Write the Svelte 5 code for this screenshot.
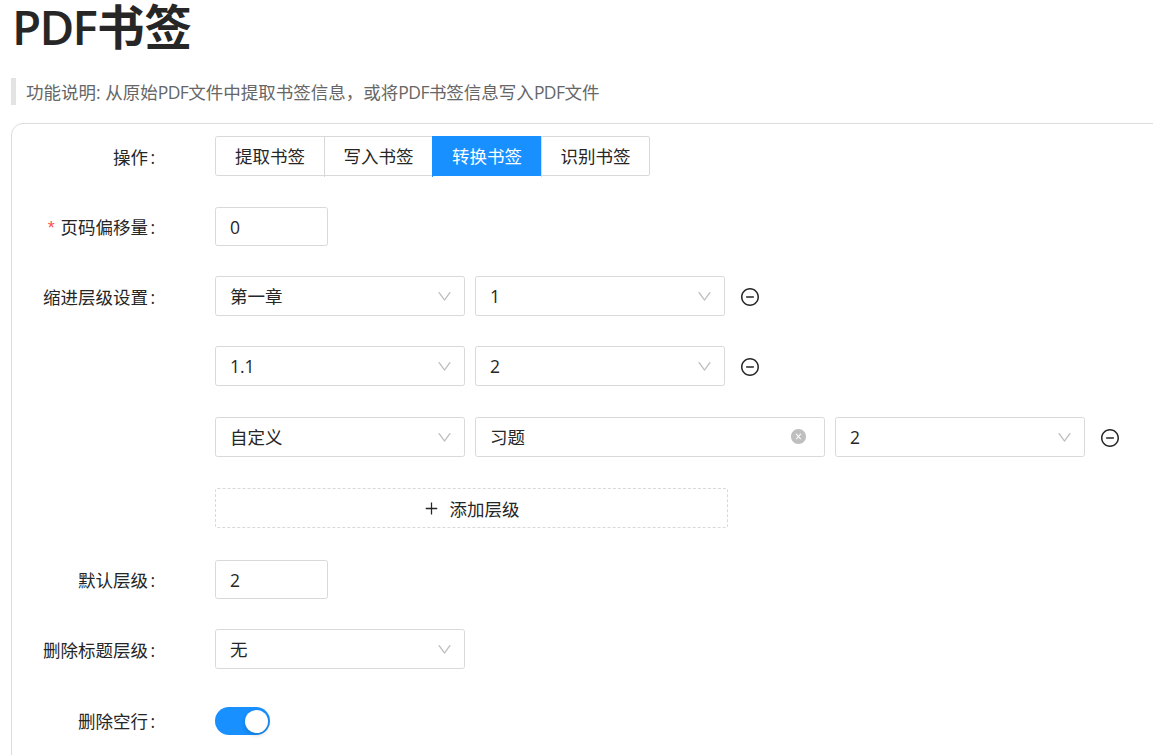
<script>
  const down = "M884 256h-75c-5.1 0-9.9 2.5-12.9 6.6L512 654.2 227.9 262.6c-3-4.1-7.8-6.6-12.9-6.6h-75c-6.5 0-10.3 7.4-6.5 12.7l352.6 486.1c12.8 17.6 39 17.6 51.7 0l352.6-486.1c3.9-5.3.1-12.7-6.4-12.7z";
  const tabs = ["提取书签", "写入书签", "转换书签", "识别书签"];
</script>

{#snippet select(value, cls = "")}
  <div class="box select {cls}">
    <span>{value}</span>
    <svg class="arrow" viewBox="64 64 896 896" fill="currentColor"><path d={down} /></svg>
  </div>
{/snippet}

{#snippet minus()}
  <svg class="minus" viewBox="64 64 896 896" fill="currentColor">
    <path d="M696 480H328c-4.4 0-8 3.6-8 8v48c0 4.4 3.6 8 8 8h368c4.4 0 8-3.6 8-8v-48c0-4.4-3.6-8-8-8z" />
    <path d="M512 64C264.6 64 64 264.6 64 512s200.6 448 448 448 448-200.6 448-448S759.4 64 512 64zm0 820c-205.4 0-372-166.6-372-372s166.6-372 372-372 372 166.6 372 372-166.6 372-372 372z" />
  </svg>
{/snippet}

<div class="page">
  <h1>PDF<b>书签</b></h1>
  <p class="note">功能说明: 从原始<span>PDF</span>文件中提取书签信息，或将<span>PDF</span>书签信息写入<span>PDF</span>文件</p>

  <div class="card">
    <div class="row">
      <div class="label">操作</div>
      <div class="segments">
        {#each tabs as tab, i}
          <div class="seg" class:active={i === 2}>{tab}</div>
        {/each}
      </div>
    </div>

    <div class="row g31">
      <div class="label"><i>*</i>页码偏移量</div>
      <div class="box num">0</div>
    </div>

    <div class="row g30">
      <div class="label">缩进层级设置</div>
      <div class="controls">
        {@render select("第一章")}
        {@render select("1")}
        {@render minus()}
      </div>
    </div>

    <div class="row g30">
      <div class="label empty"></div>
      <div class="controls">
        {@render select("1.1")}
        {@render select("2")}
        {@render minus()}
      </div>
    </div>

    <div class="row g31">
      <div class="label empty"></div>
      <div class="controls">
        {@render select("自定义")}
        <div class="box text">
          <span>习题</span>
          <svg class="clear" viewBox="64 64 896 896" fill="currentColor"><path d="M512 64C264.6 64 64 264.6 64 512s200.6 448 448 448 448-200.6 448-448S759.4 64 512 64zm165.4 618.2l-66-.3L512 563.4l-99.3 118.4-66.1.3c-4.4 0-8-3.5-8-8 0-1.9.7-3.7 1.9-5.2l130.1-155L340.5 359a8.32 8.32 0 0 1-1.9-5.2c0-4.4 3.6-8 8-8l66.1.3L512 464.6l99.3-118.4 66-.3c4.4 0 8 3.5 8 8 0 1.9-.7 3.7-1.9 5.2L553.5 514l130 155c1.2 1.5 1.9 3.3 1.9 5.2 0 4.4-3.6 8-8 8z" /></svg>
        </div>
        {@render select("2")}
        {@render minus()}
      </div>
    </div>

    <div class="row g31">
      <div class="label empty"></div>
      <div class="add">
        <svg viewBox="64 64 896 896" fill="currentColor"><path d="M482 152h60q8 0 8 8v704q0 8-8 8h-60q-8 0-8-8V160q0-8 8-8z" /><path d="M176 474h672q8 0 8 8v60q0 8-8 8H176q-8 0-8-8v-60q0-8 8-8z" /></svg>
        <span>添加层级</span>
      </div>
    </div>

    <div class="row g32">
      <div class="label">默认层级</div>
      <div class="box num">2</div>
    </div>

    <div class="row g30">
      <div class="label">删除标题层级</div>
      {@render select("无")}
    </div>

    <div class="row g32 switch-row">
      <div class="label">删除空行</div>
      <div class="switch"><div class="knob"></div></div>
    </div>
  </div>
</div>

<style>
  :global(body) {
    margin: 0;
    background: #fff;
    overflow: hidden;
  }
  .page {
    height: 755px;
    overflow: hidden;
    font-family: "Open Sans", "Noto Sans CJK SC", sans-serif;
    font-size: 17.5px;
    color: #262626;
  }
  h1 {
    margin: 0;
    padding: 0 0 0 12px;
    height: 78px;
    font-size: 47.5px;
    line-height: 54px;
    font-weight: 600;
    letter-spacing: -1.8px;
    color: #262626;
  }
  h1 b {
    font-weight: 700;
    letter-spacing: 0;
    margin-left: 1px;
  }
  .note {
    margin: 0 0 18px 11px;
    height: 27px;
    line-height: 28px;
    padding-left: 10px;
    border-left: 5px solid #e3e3e3;
    color: #666;
    font-size: 17.5px;
  }
  .note span {
    letter-spacing: -0.55px;
  }
  .card {
    margin-left: 11px;
    width: 1300px;
    height: 800px;
    box-sizing: border-box;
    padding-top: 12px;
    border: 1px solid #ddd;
    border-radius: 12px;
  }
  .row {
    display: flex;
    align-items: center;
    min-height: 39px;
  }
  .g30 { margin-top: 30px; }
  .g31 { margin-top: 31px; }
  .g32 { margin-top: 32px; }
  .label {
    width: 203px;
    flex: none;
    box-sizing: border-box;
    padding-right: 60px;
    text-align: right;
    white-space: nowrap;
  }
  .label:not(.empty)::after {
    content: ":";
    margin-left: 2.5px;
  }
  .label i {
    color: #ff4d4f;
    font-style: normal;
    font-family: "Liberation Mono", monospace;
    margin-right: 4px;
  }
  .switch-row .label {
    padding-bottom: 2px;
  }
  .segments {
    display: flex;
    height: 40px;
  }
  .seg {
    position: relative;
    width: 109px;
    height: 40px;
    box-sizing: border-box;
    line-height: 38px;
    text-align: center;
    border: 1px solid #d9d9d9;
    border-left: 0;
  }
  .seg:nth-child(2) {
    width: 108px;
  }
  .seg:first-child {
    width: 110px;
    border-left: 1px solid #d9d9d9;
    border-radius: 2.5px 0 0 2.5px;
  }
  .seg:last-child {
    width: 108px;
    border-radius: 0 2.5px 2.5px 0;
  }
  .seg:not(:first-child)::before {
    content: "";
    position: absolute;
    left: -1px;
    top: -1px;
    width: 1px;
    height: 41px;
    background: #d9d9d9;
  }
  .seg.active {
    background: #1890ff;
    border-color: #1890ff;
    color: #fff;
  }
  .seg.active::before {
    background: #1890ff;
  }
  .box {
    box-sizing: border-box;
    height: 40px;
    border: 1px solid #d9d9d9;
    border-radius: 2.5px;
    display: flex;
    align-items: center;
    padding: 0 12px 1px 14px;
    flex: none;
    background: #fff;
  }
  .num {
    width: 113px;
    height: 39px;
    padding-bottom: 0;
  }
  .select {
    width: 250px;
    justify-content: space-between;
  }
  .text {
    width: 350px;
    justify-content: space-between;
    padding-right: 18px;
  }
  .controls {
    display: flex;
    align-items: center;
    gap: 10px;
  }
  .arrow {
    width: 15px;
    height: 15px;
    margin-top: 1px;
    color: #bfbfbf;
  }
  .clear {
    width: 15px;
    height: 15px;
    color: #bfbfbf;
  }
  .minus {
    width: 18px;
    height: 18px;
    margin: 1px 0 0 6px;
    color: #262626;
  }
  .add {
    width: 513px;
    height: 40px;
    box-sizing: border-box;
    border: 1px dashed #d9d9d9;
    border-radius: 2.5px;
    display: flex;
    align-items: center;
    justify-content: center;
    gap: 11px;
  }
  .add svg {
    width: 15px;
    height: 15px;
  }
  .switch {
    width: 55px;
    height: 28px;
    border-radius: 14px;
    background: #1890ff;
    display: flex;
    align-items: center;
    justify-content: flex-end;
    padding-right: 2.5px;
    box-sizing: border-box;
    margin: 6px 0;
  }
  .knob {
    width: 23px;
    height: 23px;
    border-radius: 50%;
    background: #fff;
    box-shadow: 0 2px 4px rgba(0, 35, 11, 0.2);
  }
</style>
